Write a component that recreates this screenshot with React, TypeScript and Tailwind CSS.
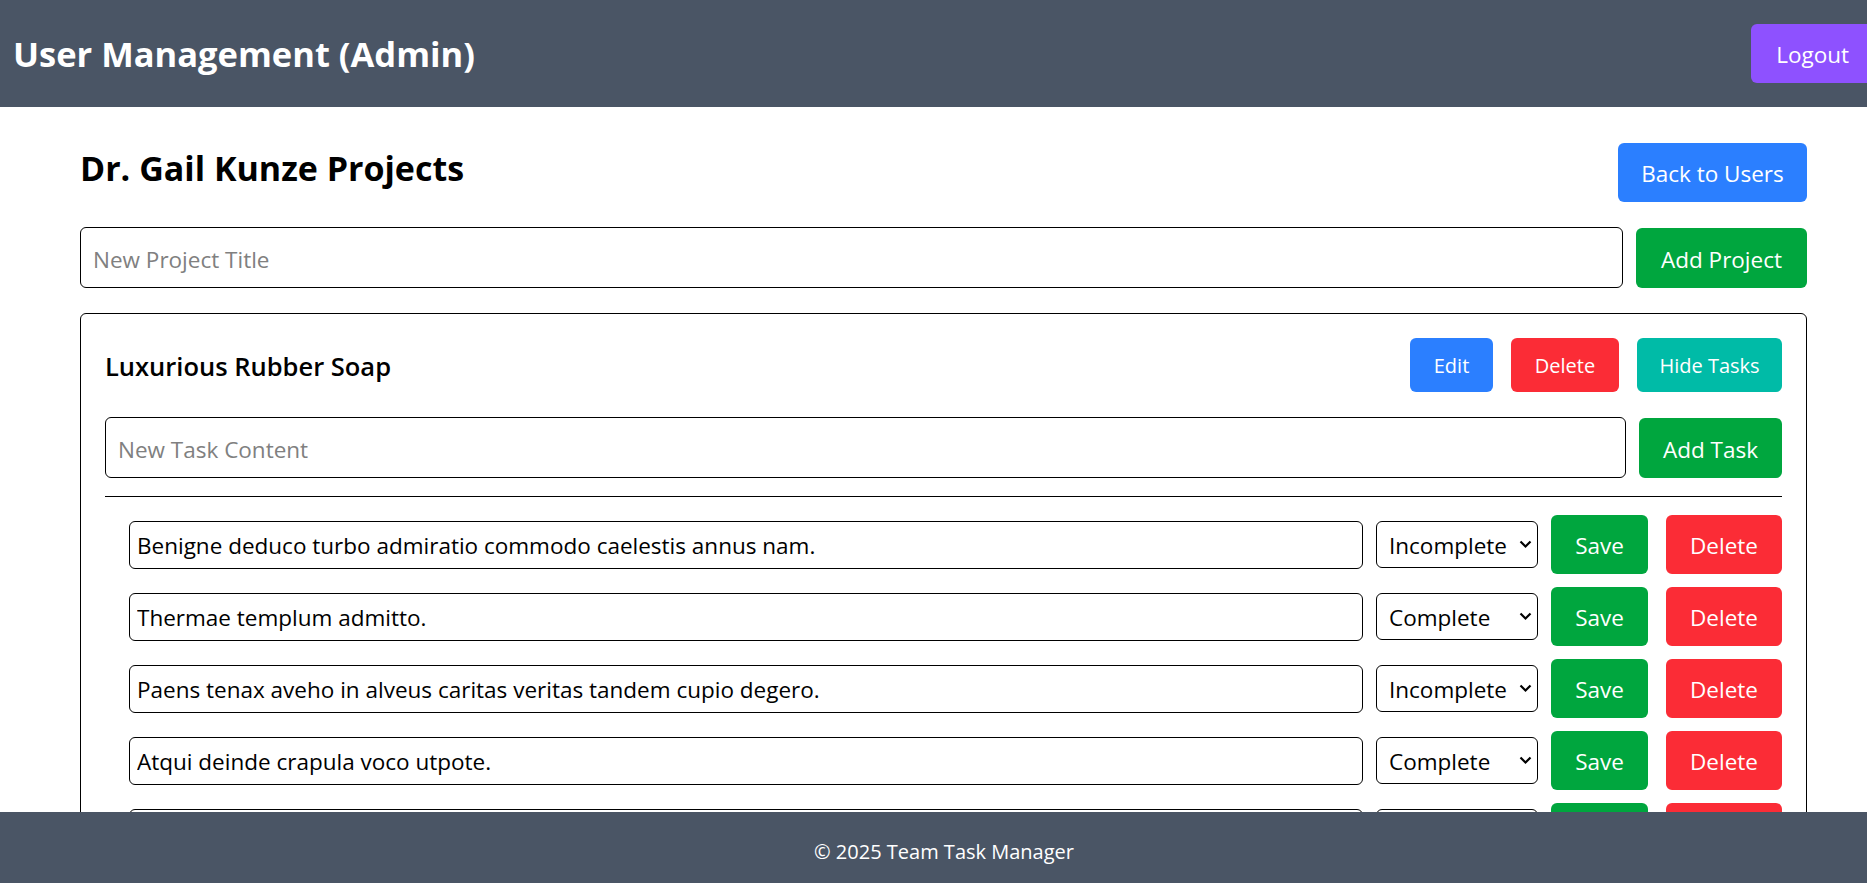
import React from 'react';

const tasks = [
  { text: 'Benigne deduco turbo admiratio commodo caelestis annus nam.', status: 'Incomplete' },
  { text: 'Thermae templum admitto.', status: 'Complete' },
  { text: 'Paens tenax aveho in alveus caritas veritas tandem cupio degero.', status: 'Incomplete' },
  { text: 'Atqui deinde crapula voco utpote.', status: 'Complete' },
  { text: 'Vulticulus cognatus angulus tantillus.', status: 'Incomplete' },
];

const TaskRow = ({ text, status }: { text: string; status: string }) => {
  return (
    <div className="flex h-[59px] items-center">
      <input
        defaultValue={text}
        className="h-[48px] flex-1 rounded-[6px] border border-black px-[7px] pt-[2px] text-[22.5px] outline-none"
      />
      {/* status select */}
      <div className="relative ml-[13px] h-[47px] w-[162px]">
        <select
          defaultValue={status}
          className="h-full w-full appearance-none rounded-[6px] border border-black bg-white pl-[12px] pt-[2px] text-[22.5px] outline-none"
        >
          <option>Incomplete</option>
          <option>Complete</option>
        </select>
        <svg
          className="pointer-events-none absolute right-[6px] top-[19px]"
          width="13"
          height="9"
          viewBox="0 0 13 9"
          fill="none"
          stroke="black"
          strokeWidth={2.2}
        >
          <path d="M1.5 1.5 L6.5 6.5 L11.5 1.5" />
        </svg>
      </div>
      <button className="ml-[13px] h-[59px] w-[97px] rounded-[6px] bg-green-600 pt-[3px] text-[22.5px] text-white">
        Save
      </button>
      <button className="ml-[18px] h-[59px] w-[116px] rounded-[6px] bg-red-500 pt-[3px] text-[22.5px] text-white">
        Delete
      </button>
    </div>
  );
};

const App = () => {
  return (
    <div className="min-h-screen bg-white font-['Open_Sans',sans-serif] text-black">
      <header className="flex h-[107px] items-center justify-between bg-[#4a5565] pl-[13px]">
        <h1 className="text-[34.5px] font-bold leading-[48px] text-white">User Management (Admin)</h1>
        <button className="h-[59px] rounded-l-[6px] bg-violet-500 pl-[25px] pr-[18px] pt-[2px] text-[22.5px] text-white">
          Logout
        </button>
      </header>

      <main className="pl-[80px] pr-[60px] pt-[36px] pb-[120px]">
        <div className="mb-[25px] flex items-start justify-between">
          <h2 className="mt-[1px] text-[34px] font-bold leading-[48px]">Dr. Gail Kunze Projects</h2>
          <button className="h-[59px] w-[189px] rounded-[6px] bg-blue-500 pt-[2px] text-[22.5px] text-white">
            Back to Users
          </button>
        </div>

        <div className="mb-[25px] flex items-end gap-[13px]">
          <input
            placeholder="New Project Title"
            className="h-[61px] flex-1 rounded-[6px] border border-black px-[12px] pt-[3px] text-[22.5px] outline-none placeholder:text-[#808080]"
          />
          <button className="h-[60px] w-[171px] rounded-[6px] bg-green-600 pt-[3px] text-[22.5px] text-white">
            Add Project
          </button>
        </div>

        {/* Project card */}
        <div className="rounded-[6px] border border-black p-[24px]">
          <div className="mb-[25px] flex items-center justify-between">
            <h3 className="pt-[2px] text-[25.5px] font-semibold">Luxurious Rubber Soap</h3>
            <div className="flex gap-[18px]">
              <button className="h-[54px] w-[83px] rounded-[6px] bg-blue-500 pt-[2px] text-[20px] text-white">Edit</button>
              <button className="h-[54px] w-[108px] rounded-[6px] bg-red-500 pt-[2px] text-[20px] text-white">Delete</button>
              <button className="h-[54px] w-[145px] rounded-[6px] bg-teal-500 pt-[2px] text-[20px] text-white">
                Hide Tasks
              </button>
            </div>
          </div>

          <div className="flex items-end gap-[13px]">
            <input
              placeholder="New Task Content"
              className="h-[61px] flex-1 rounded-[6px] border border-black px-[12px] pt-[3px] text-[22.5px] outline-none placeholder:text-[#808080]"
            />
            <button className="h-[60px] w-[143px] rounded-[6px] bg-green-600 pt-[3px] text-[22.5px] text-white">
              Add Task
            </button>
          </div>

          <hr className="my-[18px] border-black" />

          <div className="ml-[24px] flex flex-col gap-[13px]">
            {tasks.map((t) => (
              <TaskRow key={t.text} text={t.text} status={t.status} />
            ))}
          </div>
        </div>
      </main>

      <footer className="fixed bottom-0 left-0 right-0 h-[71px] bg-[#4a5565] pl-[21px] pt-[25px] text-center text-[20px] leading-[30px] text-white">
        © 2025 Team Task Manager
      </footer>
    </div>
  );
};

export default App;
